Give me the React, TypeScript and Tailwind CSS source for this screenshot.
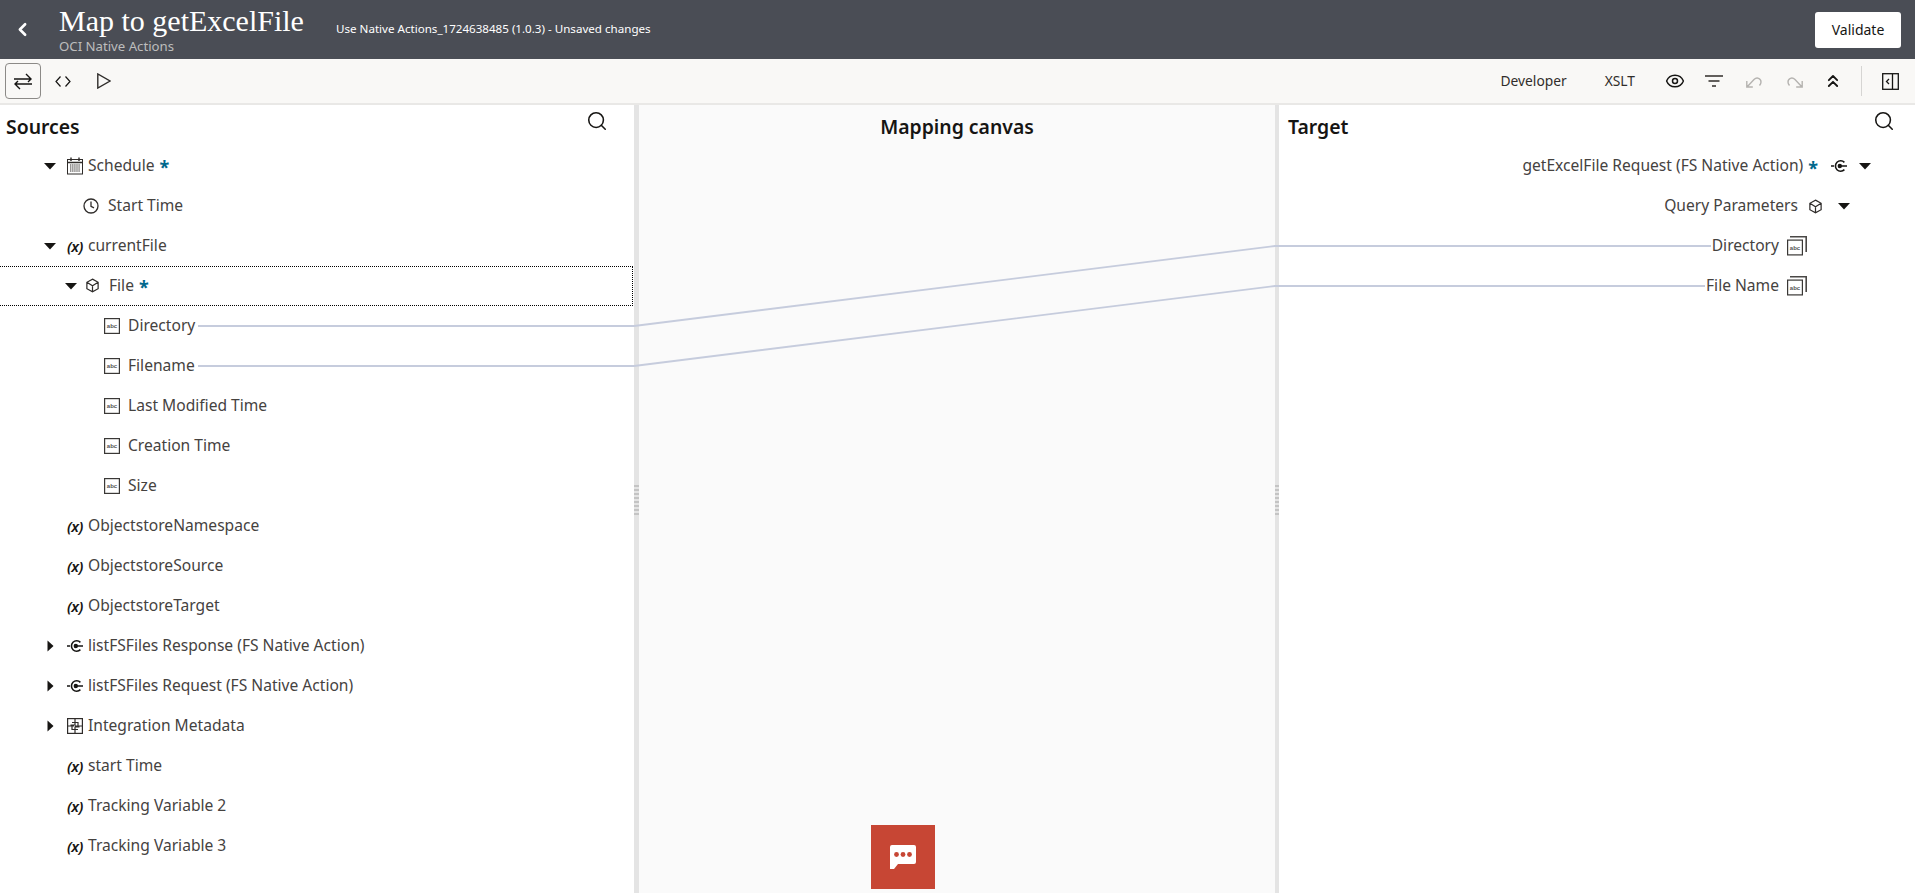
import React from 'react';
import { ChevronLeft, Search, Eye, ChevronsUp } from 'lucide-react';

const font = { fontFamily: '"Noto Sans", sans-serif' };

const Caret = ({ open }: { open: boolean }) => (
  <svg width="14" height="14" viewBox="0 0 14 14" className="shrink-0">
    {open ? <path d="M1 4h12L7 10.5z" fill="#161513" /> : <path d="M4.5 1.5v11L10.5 7z" fill="#161513" />}
  </svg>
);

const CalendarIcon = () => (
  <svg width="16" height="18" viewBox="0 0 16 18" fill="none" stroke="#2f2c2a" className="shrink-0">
    <rect x=".5" y="2.500" width="15" height="14.500" />
    <path d="M.5 5.500h15M4 .5v3.500M12 .5v3.500" strokeWidth="1.4" />
    <path d="M3 8h10M3 10h10M3 12h10M3 14h10" strokeDasharray="1.4 .7" />
  </svg>
);

const ClockIcon = () => (
  <svg width="16" height="16" viewBox="0 0 16 16" fill="none" stroke="#2f2c2a" strokeWidth="1.3" className="shrink-0">
    <circle cx="8" cy="8" r="7" />
    <path d="M8 3.500v4.800l3 1.500" />
  </svg>
);

const VarIcon = () => (
  <span className="w-[21px] shrink-0 text-[15px] font-semibold italic tracking-[-0.5px] text-[#161513]">(x)</span>
);

const CubeIcon = () => (
  <svg width="15" height="15" viewBox="0 0 16 16" fill="none" stroke="#2f2c2a" strokeWidth="1.3" className="shrink-0">
    <path d="M8 1.200l6 3.400v6.800l-6 3.400-6-3.400V4.600zM2 4.600l6 3.600 6-3.600M8 8.200v6.600" />
  </svg>
);

const AbcIcon = ({ stacked }: { stacked?: boolean }) => (
  <svg width={stacked ? 20 : 16} height={stacked ? 20 : 16} viewBox={stacked ? '0 0 20 20' : '0 0 16 16'} fill="none" className="shrink-0">
    {stacked && <path d="M3 .8h16.200V16" stroke="#4a4846" strokeWidth="1.600" />}
    <g transform={stacked ? 'translate(0 3.5)' : ''}>
      <rect x=".6" y=".6" width="14.8" height="14.8" stroke="#3a3836" strokeWidth="1.2" />
      <text x="8" y="10" textAnchor="middle" fontSize="6" fontWeight="700" fill="#555" fontFamily="Liberation Sans">abc</text>
    </g>
  </svg>
);

const ActionIcon = () => (
  <svg width="16" height="14" viewBox="0 0 16 14" fill="none" stroke="#161513" strokeWidth="1.600" className="shrink-0">
    <path d="M13.400 3.400A5.200 5.200 0 1 0 13.400 10.600" />
    <circle cx="8.800" cy="7" r="2.200" fill="#161513" stroke="none" />
    <path d="M0 7h3M8.800 7H16" />
  </svg>
);

const MetadataIcon = () => (
  <svg width="16" height="16" viewBox="0 0 16 16" fill="none" stroke="#2f2c2a" strokeWidth="1.2" className="shrink-0">
    <rect x=".6" y=".6" width="14.8" height="14.8" />
    <path d="M8 1v6H3.500M8 15V9h4.500M8 8h7M1 8h6M5 4.500h6v3M11 11.500H5v-3" />
  </svg>
);

const Star = () => <span className="-mt-[3px] h-[12px] text-[18px] font-bold leading-[18px] text-[#00688c]">*</span>;

type Row = {
  label: string;
  pad: string;
  caret?: 'open' | 'closed';
  icon: React.ReactNode;
  gap?: string;
  star?: boolean;
};

const sourceRows: Row[] = [
  { label: 'Schedule', pad: 'pl-[43px]', caret: 'open', icon: <CalendarIcon />, star: true },
  { label: 'Start Time', pad: 'pl-[83px]', icon: <ClockIcon />, gap: 'gap-[9px]' },
  { label: 'currentFile', pad: 'pl-[43px]', caret: 'open', icon: <VarIcon />, gap: 'gap-0' },
  { label: 'Directory', pad: 'pl-[104px]', icon: <AbcIcon />, gap: 'gap-2' },
  { label: 'Filename', pad: 'pl-[104px]', icon: <AbcIcon />, gap: 'gap-2' },
  { label: 'Last Modified Time', pad: 'pl-[104px]', icon: <AbcIcon />, gap: 'gap-2' },
  { label: 'Creation Time', pad: 'pl-[104px]', icon: <AbcIcon />, gap: 'gap-2' },
  { label: 'Size', pad: 'pl-[104px]', icon: <AbcIcon />, gap: 'gap-2' },
  { label: 'ObjectstoreNamespace', pad: 'pl-[67px]', icon: <VarIcon />, gap: 'gap-0' },
  { label: 'ObjectstoreSource', pad: 'pl-[67px]', icon: <VarIcon />, gap: 'gap-0' },
  { label: 'ObjectstoreTarget', pad: 'pl-[67px]', icon: <VarIcon />, gap: 'gap-0' },
  { label: 'listFSFiles Response (FS Native Action)', pad: 'pl-[43px]', caret: 'closed', icon: <ActionIcon /> },
  { label: 'listFSFiles Request (FS Native Action)', pad: 'pl-[43px]', caret: 'closed', icon: <ActionIcon /> },
  { label: 'Integration Metadata', pad: 'pl-[43px]', caret: 'closed', icon: <MetadataIcon /> },
  { label: 'start Time', pad: 'pl-[67px]', icon: <VarIcon />, gap: 'gap-0' },
  { label: 'Tracking Variable 2', pad: 'pl-[67px]', icon: <VarIcon />, gap: 'gap-0' },
  { label: 'Tracking Variable 3', pad: 'pl-[67px]', icon: <VarIcon />, gap: 'gap-0' },
];

const SourceRow = ({ row }: { row: Row }) => (
  <div className={`flex h-10 items-center ${row.pad}`}>
    {row.caret && <span className="mr-[10px]"><Caret open={row.caret === 'open'} /></span>}
    <span className={`flex items-center ${row.gap || 'gap-[5px]'}`}>
      {row.icon}
      <span>{row.label}</span>
      {row.star && <Star />}
    </span>
  </div>
);

const Divider = ({ w }: { w: string }) => (
  <div className={`relative ${w} shrink-0 bg-[#e4e4e4]`}>
    <div className="absolute left-0 top-[380px] h-[30px] w-full bg-[repeating-linear-gradient(0deg,#c4c4c4_0,#c4c4c4_2px,#e4e4e4_2px,#e4e4e4_4px)]" />
  </div>
);

export default function App() {
  return (
    <div className="relative flex h-screen flex-col overflow-hidden bg-white text-[15.6px] text-[#45423f]" style={font}>
      <header className="flex h-[59px] shrink-0 items-center bg-[#4a4d55] pr-[14px]">
        <ChevronLeft className="ml-[12px] h-[21px] w-[21px] text-white" strokeWidth={3} />
        <div className="ml-[26px] flex w-[277px] shrink-0 flex-col">
          <span className="text-[30px] leading-[30px] text-white" style={{ fontFamily: '"Liberation Serif", serif' }}>Map to getExcelFile</span>
          <span className="mt-[2px] text-[13.2px] leading-[16px] text-[#bdbdbd]">OCI Native Actions</span>
        </div>
        <span className="mb-[1px] text-[11.6px] text-white">Use Native Actions_1724638485 (1.0.3) - Unsaved changes</span>
        <button className="ml-auto h-[36px] w-[86px] rounded-[3px] bg-white text-[14px] text-[#161513]">Validate</button>
      </header>

      <div className="flex h-[46px] shrink-0 items-center border-b-2 border-[#e9e8e6] bg-[#f9f8f6] text-[13.8px] text-[#302d2a]">
        <button className="ml-[5px] flex h-[36px] w-[36px] items-center justify-center rounded-[4px] border border-[#8c8a87]">
          <svg width="18" height="17" viewBox="0 0 18 17" fill="none" stroke="#161513" strokeWidth="1.4">
            <path d="M0 6h17M12 1l5 5-3 3M18 11H1M6 16l-5-5 3-3" />
          </svg>
        </button>
        <svg width="16" height="11" viewBox="0 0 16 11" fill="none" stroke="#161513" strokeWidth="1.2" className="ml-[14px]">
          <path d="M5.500 .5L1 5.500l4.500 5M10.500 .5L15 5.500l-4.500 5" />
        </svg>
        <svg width="14" height="16" viewBox="0 0 14 16" fill="none" stroke="#2f2c2a" strokeWidth="1.4" className="ml-[26px]">
          <path d="M.8 1v14L13 8z" />
        </svg>
        <span className="ml-auto">Developer</span>
        <span className="ml-[38px]">XSLT</span>
        <Eye className="ml-[30px] h-[20px] w-[20px] text-[#161513]" strokeWidth={1.8} />
        <svg width="18" height="14" viewBox="0 0 18 14" stroke="#302d2a" strokeWidth="1.5" className="ml-[20px]">
          <path d="M0 2h18M3.500 7h11M7 12h4" />
        </svg>
        <svg width="17" height="13" viewBox="0 0 17 13" fill="none" stroke="#b5b3b0" strokeWidth="1.4" className="ml-[23px]">
          <path d="M.8 6v6h6M1 12L8 4.500c3-3 7-1 7 2.500 0 1.500-.6 2.500-1.500 3.500" />
        </svg>
        <svg width="17" height="13" viewBox="0 0 17 13" fill="none" stroke="#b5b3b0" strokeWidth="1.4" className="ml-[23px]">
          <path d="M16.200 6v6h-6M16 12L9 4.500c-3-3-7-1-7 2.500 0 1.500.6 2.500 1.500 3.500" />
        </svg>
        <ChevronsUp className="ml-[20px] h-[20px] w-[20px] text-[#161513]" strokeWidth={2.2} />
        <div className="ml-[18px] h-[30px] w-px bg-[#d6d5d3]" />
        <svg width="17" height="17" viewBox="0 0 17 17" fill="none" stroke="#161513" strokeWidth="1.3" className="ml-[20px] mr-[16px]">
          <rect x=".7" y=".7" width="15.6" height="15.6" />
          <path d="M10.500 1v15M7 6L4.500 8.500 7 11" />
        </svg>
      </div>

      <main className="flex min-h-0 flex-1">
        <section className="w-[634px] shrink-0">
          <div className="flex h-[41px] items-center justify-between pl-[6px] pr-[26px]">
            <h2 className="pt-[3px] text-[19.4px] font-semibold text-[#161513]">Sources</h2>
            <Search className="mb-[9px] h-[22px] w-[22px] text-[#161513]" strokeWidth={1.7} />
          </div>
          {sourceRows.slice(0, 3).map(r => <SourceRow key={r.label} row={r} />)}
          <div className="mr-[1px] flex h-10 items-center border-y border-r border-dotted border-black pl-[64px]">
            <Caret open />
            <span className="ml-[7px] flex items-center gap-[9px]">
              <CubeIcon />
              <span>File</span>
              <span className="-ml-[4px] flex items-center"><Star /></span>
            </span>
          </div>
          {sourceRows.slice(3).map(r => <SourceRow key={r.label} row={r} />)}
        </section>

        <Divider w="w-[5px]" />

        <section className="relative flex-1 bg-[#fafafa] pt-[7px] text-center">
          <h2 className="text-[19.4px] font-semibold text-[#161513]">Mapping canvas</h2>
          <button className="absolute left-[232px] top-[720px] flex h-16 w-16 items-center justify-center bg-[#c74634]">
            <svg width="26" height="24" viewBox="0 0 26 24">
              <path d="M2 0h22a2 2 0 0 1 2 2v15a2 2 0 0 1-2 2H8l-4 5H1.500L0 24V2a2 2 0 0 1 2-2z" fill="#fff" />
              <circle cx="6.500" cy="9.500" r="2.400" fill="#c74634" />
              <circle cx="13" cy="9.500" r="2.400" fill="#c74634" />
              <circle cx="19.500" cy="9.500" r="2.400" fill="#c74634" />
            </svg>
          </button>
        </section>

        <Divider w="w-[4px]" />

        <section className="flex-1">
          <div className="flex h-[41px] items-center justify-between pl-[9px] pr-[20px]">
            <h2 className="pt-[3px] text-[19.4px] font-semibold text-[#161513]">Target</h2>
            <Search className="mb-[9px] h-[22px] w-[22px] text-[#161513]" strokeWidth={1.7} />
          </div>
          <div className="flex h-10 items-center justify-end pr-[43px]">
            <span>getExcelFile Request (FS Native Action)</span>
            <span className="ml-[5px] flex items-center"><Star /></span>
            <span className="ml-[13px]"><ActionIcon /></span>
            <span className="ml-[11px]"><Caret open /></span>
          </div>
          <div className="flex h-10 items-center justify-end pr-[64px]">
            <span>Query Parameters</span>
            <span className="ml-[10px]"><CubeIcon /></span>
            <span className="ml-[14px]"><Caret open /></span>
          </div>
          <div className="flex h-10 items-center justify-end gap-2 pr-[108px]">
            <span>Directory</span>
            <AbcIcon stacked />
          </div>
          <div className="flex h-10 items-center justify-end gap-2 pr-[108px]">
            <span>File Name</span>
            <AbcIcon stacked />
          </div>
        </section>
      </main>

      <svg className="pointer-events-none absolute left-0 top-0" width="1915" height="893" fill="none" stroke="#c6ccdd" strokeWidth="1.800">
        <path d="M198 326H634L1275 246H1711" />
        <path d="M198 366H634L1275 286H1705" />
      </svg>
    </div>
  );
}
